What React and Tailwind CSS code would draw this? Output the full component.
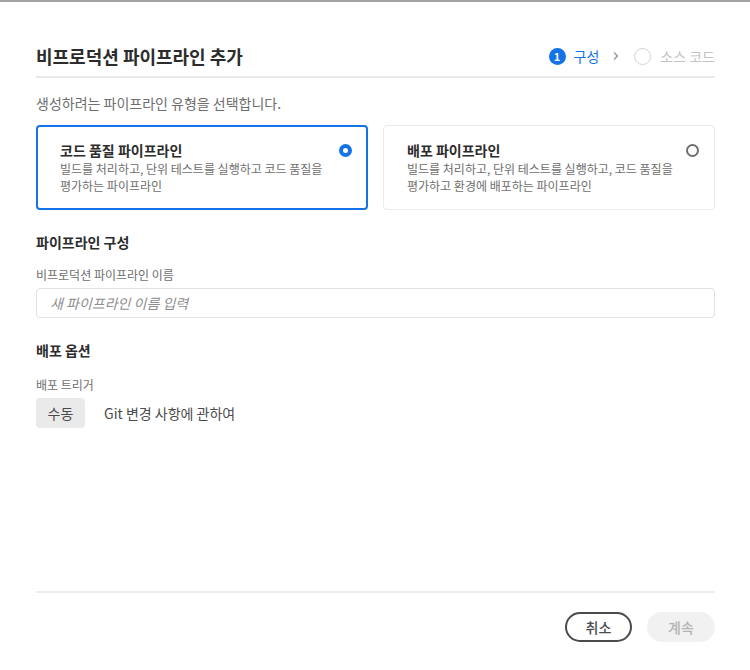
import React, { useState } from 'react';

const FONT = { fontFamily: '"Noto Sans CJK KR", "Noto Sans", sans-serif' };

function Radio({ checked }) {
  if (checked) {
    return (
      <span className="flex h-[13px] w-[13px] items-center justify-center rounded-full bg-[#1473e6]">
        <span className="h-[5px] w-[5px] rounded-full bg-white" />
      </span>
    );
  }
  return <span className="block h-[13px] w-[13px] rounded-full border-2 border-[#6e6e6e] bg-white" />;
}

function TypeCard({ title, desc, selected, onClick }) {
  return (
    <div
      onClick={onClick}
      className={
        'flex h-[85px] cursor-pointer justify-between rounded-[4px] bg-white ' +
        (selected ? 'border-2 border-[#1473e6] pl-[22px] pr-[14px] pt-[13px]' : 'border border-[#ebebeb] pl-[23px] pr-[15px] pt-[14px]')
      }
    >
      <div>
        <div className="text-[14px] font-bold leading-[20px] text-[#2c2c2c]">{title}</div>
        <div className="w-[275px] break-keep text-[12px] leading-[17px] text-[#6e6e6e]">{desc}</div>
      </div>
      <div className="pt-[4px]">
        <Radio checked={selected} />
      </div>
    </div>
  );
}

export default function App() {
  const [type, setType] = useState('quality');
  const [name, setName] = useState('');

  return (
    <div style={FONT} className="flex h-[670px] w-[750px] flex-col border-t-2 border-[#a3a3a3] bg-white pl-[36px] pr-[35px]">
      <div className="mt-[34px] flex h-[40px] items-center justify-between">
        <h1 className="text-[18px] font-bold text-[#2c2c2c]">비프로덕션 파이프라인 추가</h1>
        <div className="flex items-center text-[14px]">
          <span className="flex h-[17px] w-[17px] items-center justify-center rounded-full bg-[#1473e6] text-[11px] font-bold text-white">1</span>
          <span className="ml-[8px] text-[#1473e6]">구성</span>
          <svg className="ml-[13px]" width="8" height="10" viewBox="0 0 8 10" fill="none">
            <path d="M2.5 2 L5.5 5 L2.5 8" stroke="#9a9a9a" strokeWidth="1.5" strokeLinecap="round" strokeLinejoin="round" />
          </svg>
          <span className="ml-[14px] block h-[17px] w-[17px] rounded-full border-[1.5px] border-[#d3d3d3]" />
          <span className="ml-[9px] text-[#c4c4c4]">소스 코드</span>
        </div>
      </div>
      <div className="h-[2px] bg-[#e9e9e9]" />

      <p className="mt-[15px] text-[14px] leading-[20px] text-[#6e6e6e]">생성하려는 파이프라인 유형을 선택합니다.</p>

      <div className="mt-[12px] grid grid-cols-2 gap-[15px]">
        <TypeCard
          title="코드 품질 파이프라인"
          desc="빌드를 처리하고, 단위 테스트를 실행하고 코드 품질을 평가하는 파이프라인"
          selected={type === 'quality'}
          onClick={() => setType('quality')}
        />
        <TypeCard
          title="배포 파이프라인"
          desc="빌드를 처리하고, 단위 테스트를 실행하고, 코드 품질을 평가하고 환경에 배포하는 파이프라인"
          selected={type === 'deploy'}
          onClick={() => setType('deploy')}
        />
      </div>

      <h2 className="mt-[22px] text-[14px] font-bold leading-[20px] text-[#2c2c2c]">파이프라인 구성</h2>
      <label className="mt-[15px] text-[12px] leading-[16px] text-[#6e6e6e]">비프로덕션 파이프라인 이름</label>
      <input
        value={name}
        onChange={(e) => setName(e.target.value)}
        placeholder="새 파이프라인 이름 입력"
        className="mt-[5px] h-[30px] rounded-[4px] border border-[#e1e1e1] px-[13px] text-[14px] text-[#2c2c2c] outline-none placeholder:italic placeholder:text-[#8e8e8e]"
        style={FONT}
      />

      <h2 className="mt-[22px] text-[14px] font-bold leading-[20px] text-[#2c2c2c]">배포 옵션</h2>
      <label className="mt-[17px] text-[12px] leading-[16px] text-[#6e6e6e]">배포 트리거</label>
      <div className="mt-[5px] flex items-center">
        <button className="h-[30px] w-[49px] rounded-[4px] bg-[#eaeaea] text-[14px] text-[#4b4b4b]" style={FONT}>수동</button>
        <span className="ml-[19px] text-[14px] text-[#4b4b4b]">Git 변경 사항에 관하여</span>
      </div>

      <div className="flex-1" />
      <div className="h-[2px] bg-[#ededed]" />
      <div className="mb-[28px] mt-[19px] flex justify-end gap-[15px]">
        <button className="h-[30px] w-[67px] rounded-full border-2 border-[#4b4b4b] text-[14px] font-medium text-[#4b4b4b]" style={FONT}>취소</button>
        <button disabled className="h-[30px] w-[68px] rounded-full bg-[#f1f1f1] text-[14px] font-medium text-[#b3b3b3]" style={FONT}>계속</button>
      </div>
    </div>
  );
}
